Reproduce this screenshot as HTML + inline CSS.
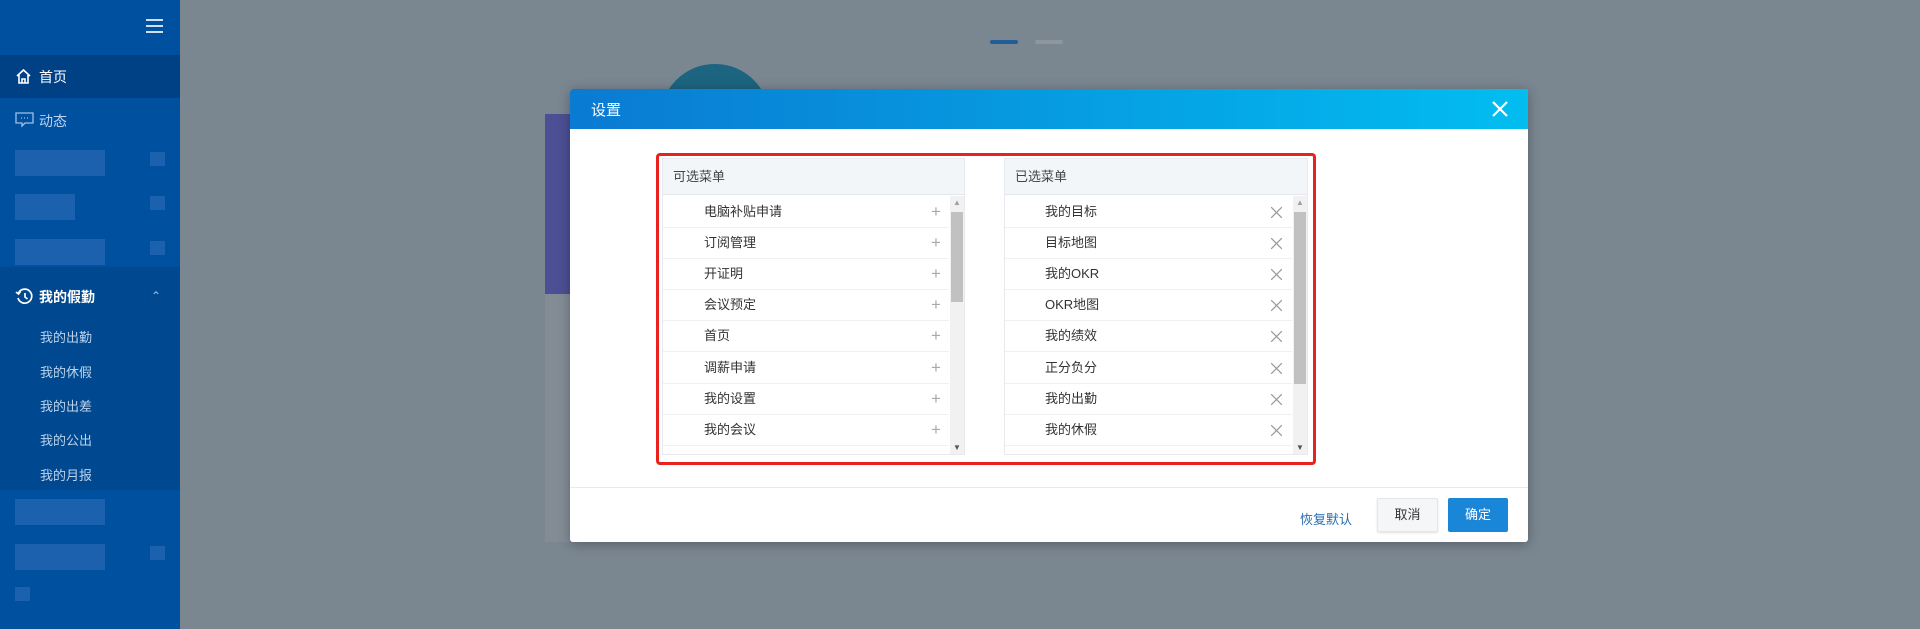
<!DOCTYPE html>
<html><head><meta charset="utf-8"><style>
*{margin:0;padding:0;box-sizing:border-box}
body{width:1920px;height:629px;overflow:hidden;position:relative;background:#7a8690;font-family:"Liberation Sans","Noto Sans CJK SC",sans-serif}
.abs{position:absolute}
.side{left:0;top:0;width:180px;height:629px;background:#0050a0}
.side .t{position:absolute;color:#dfe8f5;font-size:14px}
.blur{position:absolute;background:#2f6db5;opacity:.6}
.row{position:absolute;left:0;width:300px;height:31px;border-bottom:1px solid #eef0f3;font-size:13px;color:#333;line-height:30px}
</style></head><body>
<div class="abs side">
 <div class="abs" style="left:146px;top:19px;width:17px;height:2px;background:#cfe0f5;box-shadow:0 6px 0 #cfe0f5,0 12px 0 #cfe0f5"></div>
 <div class="abs" style="left:0;top:55px;width:180px;height:43px;background:#004085"></div>
 <svg class="abs" style="left:15px;top:68px" width="17" height="17" viewBox="0 0 17 17" fill="none" stroke="#fff" stroke-width="1.6"><path d="M2 8 L8.5 2 L15 8 M4 7 V15 H13 V7 M7 15 V11 H10 V15"/></svg>
 <div class="t" style="left:39px;top:67px;color:#fff">首页</div>
 <svg class="abs" style="left:15px;top:112px" width="19" height="16" viewBox="0 0 19 16" fill="none" stroke="#9fc0e6" stroke-width="1.3"><path d="M1 1 H18 V11 H10 L7 14 V11 H1 Z"/><path d="M6 6h1M9 6h1M12 6h1"/></svg>
 <div class="t" style="left:39px;top:111px;color:#bcd3ee">动态</div>
 <div class="blur" style="left:15px;top:150px;width:90px;height:26px"></div><div class="blur" style="left:150px;top:152px;width:15px;height:14px"></div>
 <div class="blur" style="left:15px;top:194px;width:60px;height:26px"></div><div class="blur" style="left:150px;top:196px;width:15px;height:14px"></div>
 <div class="blur" style="left:15px;top:239px;width:90px;height:26px"></div><div class="blur" style="left:150px;top:241px;width:15px;height:14px"></div>
 <div class="abs" style="left:0;top:267px;width:180px;height:223px;background:#00488f"></div>
 <svg class="abs" style="left:15px;top:288px" width="18" height="17" viewBox="0 0 18 17" fill="none" stroke="#fff" stroke-width="1.7"><path d="M3.5 5 A7 7 0 1 1 3 10"/><path d="M1 4 L3.5 6 L5.5 3.5"/><path d="M10 5 V9 L12.5 11"/></svg>
 <div class="t" style="left:39px;top:287px;color:#fff;font-weight:bold">我的假勤</div>
 <div class="t" style="left:151px;top:289px;color:#9fc0e6;font-size:12px">⌃</div>
 <div class="t" style="left:40px;top:327px;font-size:13px;color:#bcd3ee">我的出勤</div>
 <div class="t" style="left:40px;top:362px;font-size:13px;color:#bcd3ee">我的休假</div>
 <div class="t" style="left:40px;top:396px;font-size:13px;color:#bcd3ee">我的出差</div>
 <div class="t" style="left:40px;top:430px;font-size:13px;color:#bcd3ee">我的公出</div>
 <div class="t" style="left:40px;top:465px;font-size:13px;color:#bcd3ee">我的月报</div>
 <div class="blur" style="left:15px;top:499px;width:90px;height:26px"></div>
 <div class="blur" style="left:15px;top:544px;width:90px;height:26px"></div><div class="blur" style="left:150px;top:546px;width:15px;height:14px"></div>
 <div class="blur" style="left:15px;top:587px;width:15px;height:14px"></div>
</div>
<div class="abs" style="left:990px;top:40px;width:28px;height:4px;border-radius:2px;background:#1f5f96"></div>
<div class="abs" style="left:1035px;top:40px;width:28px;height:4px;border-radius:2px;background:#8e969e"></div>
<div class="abs" style="left:660px;top:64px;width:110px;height:110px;border-radius:50%;background:#1c6480"></div>
<div class="abs" style="left:545px;top:114px;width:40px;height:180px;background:#4d4f95"></div>
<div class="abs" style="left:545px;top:294px;width:40px;height:248px;background:#838c95"></div>
<div class="abs" style="left:570px;top:89px;width:958px;height:453px;background:#fff;border-radius:3px;box-shadow:0 2px 12px rgba(0,0,0,.3);overflow:hidden">
 <div class="abs" style="left:0;top:0;width:958px;height:40px;background:linear-gradient(90deg,#0a7ad2,#02bdf0)"></div>
 <div class="abs" style="left:21px;top:10px;color:#fff;font-size:15px">设置</div>
 <svg class="abs" style="left:922px;top:12px" width="16" height="16" viewBox="0 0 16 16" stroke="#fff" stroke-width="2.2"><path d="M1 1L15 15M15 1L1 15"/></svg>
 <div class="abs" style="left:86px;top:64px;width:660px;height:312px;border:3px solid #e8231f;border-radius:4px"></div>
 <div class="abs" style="left:92px;top:69px;width:303px;height:297px;border:1px solid #e6e9ee;background:#fff;overflow:hidden">
  <div class="abs" style="left:0;top:0;width:303px;height:36px;background:#f3f6f9;border-bottom:1px solid #e3e7ec;font-size:13px;color:#444;line-height:36px;padding-left:10px">可选菜单</div>
  <div class="abs" style="left:287px;top:37px;width:14px;height:260px;background:#f1f1f1"></div>
  <div class="abs" style="left:288px;top:53px;width:12px;height:90px;background:#c1c1c1"></div>
  <div class="abs" style="left:290px;top:39px;font-size:8px;color:#a0a0a0">▲</div>
  <div class="abs" style="left:290px;top:284px;font-size:8px;color:#555">▼</div>
 </div>
 <div class="abs" style="left:434px;top:69px;width:304px;height:297px;border:1px solid #e6e9ee;background:#fff;overflow:hidden">
  <div class="abs" style="left:0;top:0;width:304px;height:36px;background:#f3f6f9;border-bottom:1px solid #e3e7ec;font-size:13px;color:#444;line-height:36px;padding-left:10px">已选菜单</div>
  <div class="abs" style="left:288px;top:37px;width:14px;height:260px;background:#f1f1f1"></div>
  <div class="abs" style="left:289px;top:53px;width:12px;height:172px;background:#c1c1c1"></div>
  <div class="abs" style="left:291px;top:39px;font-size:8px;color:#a0a0a0">▲</div>
  <div class="abs" style="left:291px;top:284px;font-size:8px;color:#555">▼</div>
 </div>
 <div class="abs" style="left:0;top:398px;width:958px;height:1px;background:#e8eaed"></div>
 <div class="abs" style="left:730px;top:420px;color:#2a6cb0;font-size:13px">恢复默认</div>
 <div class="abs" style="left:807px;top:409px;width:61px;height:34px;background:#f4f6f8;border:1px solid #e3e6ea;border-radius:2px;box-shadow:0 1px 2px rgba(0,0,0,.12);font-size:13px;color:#333;text-align:center;line-height:32px">取消</div>
 <div class="abs" style="left:878px;top:409px;width:60px;height:34px;background:#1a86d8;border-radius:2px;font-size:13px;color:#fff;text-align:center;line-height:34px">确定</div>
</div>
<div id="rows"></div>
<script>
var a=["电脑补贴申请","订阅管理","开证明","会议预定","首页","调薪申请","我的设置","我的会议"];
var b=["我的目标","目标地图","我的OKR","OKR地图","我的绩效","正分负分","我的出勤","我的休假"];
var h="";
for(var i=0;i<8;i++){var y=197+i*31.1;
h+='<div class="row" style="left:663px;top:'+y+'px;width:286px;padding-left:41px">'+a[i]+'<span style="position:absolute;left:268px;top:0;color:#aaa;font-size:17px;font-weight:300">+</span></div>';
h+='<div class="row" style="left:1005px;top:'+y+'px;width:287px;padding-left:40px">'+b[i]+'<svg style="position:absolute;left:266px;top:10px" width="11" height="11" viewBox="0 0 11 11" stroke="#999" stroke-width="1.2"><path d="M0 0L11 11M11 0L0 11"/></svg></div>';}
document.getElementById("rows").innerHTML=h;
</script>
</body></html>
